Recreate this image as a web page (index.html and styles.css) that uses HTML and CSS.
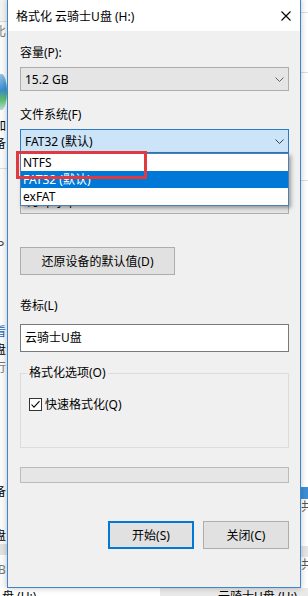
FILE: index.html
```html
<!DOCTYPE html>
<html lang="zh-CN">
<head>
    <meta charset="UTF-8">
    <title>格式化 云骑士U盘 (H:)</title>
    <meta name="viewport" content="width=device-width">
    <link rel="stylesheet" href="styles.css">
</head>
<body>
    <!-- the explorer window behind the dialog, only its edges show -->
    <div class="backdrop">
        <div class="bg-left">
            <div class="bl-top"></div>
            <span class="glyph muted g-bi">比</span>
            <div class="drive-icon"></div>
            <span class="glyph g-jia">加</span>
            <span class="glyph g-bei">备</span>
            <div class="bl-line"></div>
            <span class="glyph g-p">P</span>
            <span class="glyph link g-kan">看</span>
            <span class="glyph g-pan">盘</span>
            <span class="glyph muted g-xing">行</span>
            <span class="glyph g-bei2">备</span>
            <span class="glyph g-pan2">盘</span>
            <div class="bl-bar"></div>
            <span class="glyph muted g-b">B</span>
        </div>
        <div class="bg-mid"></div>
        <div class="bg-right">
            <div class="br-line br-1"></div>
            <div class="br-line br-2"></div>
            <div class="br-line br-3"></div>
            <div class="br-sel"></div>
            <span class="rglyph">共</span>
            <div class="br-bar"></div>
            <span class="rglyph">共</span>
        </div>
    </div>
    <div class="bg-bottom">
        <span class="bb-left">盘 (H:)</span>
        <span class="bb-right">云骑士U盘 (H:)</span>
    </div>

    <div class="dialog">
        <div class="titlebar">
            <span class="title">格式化 云骑士U盘 (H:)</span>
            <svg class="close" width="10" height="10" viewBox="0 0 10 10">
                <path d="M0.5 0.5L9.5 9.5M9.5 0.5L0.5 9.5" stroke="#000" stroke-width="1.1" fill="none"/>
            </svg>
        </div>

        <div class="content">
            <div class="label l-cap">容量(P):</div>
            <div class="combo">
                <span>15.2 GB</span>
                <svg class="chevron" width="9" height="5" viewBox="0 0 9 5">
                    <polyline points="0.5,0.5 4.5,4.5 8.5,0.5" stroke="#606060" fill="none"/>
                </svg>
            </div>

            <div class="label l-fs">文件系统(F)</div>
            <div class="combo-wrap">
                <div class="combo focused">
                    <span>FAT32 (默认)</span>
                    <svg class="chevron" width="9" height="5" viewBox="0 0 9 5">
                        <polyline points="0.5,0.5 4.5,4.5 8.5,0.5" stroke="#404040" fill="none"/>
                    </svg>
                </div>
                <ul class="dropdown">
                    <li>NTFS</li>
                    <li class="selected">FAT32 (默认)</li>
                    <li>exFAT</li>
                </ul>
                <div class="highlight"></div>
            </div>

            <div class="label l-unit">分配单元大小(A)</div>
            <div class="combo c-unit">
                <span>16 千字节</span>
            </div>

            <button class="btn btn-restore">还原设备的默认值(D)</button>

            <div class="label l-vol">卷标(L)</div>
            <div class="textbox">云骑士U盘</div>

            <fieldset class="group">
                <legend>格式化选项(O)</legend>
                <div class="group-body">
                    <div class="check-row">
                        <svg class="checkbox" width="13" height="13" viewBox="0 0 13 13">
                            <rect x="0.5" y="0.5" width="12" height="12" fill="#fff" stroke="#333"/>
                            <polyline points="2.5,6.5 5,9.2 10.5,3.2" stroke="#000" stroke-width="1.1" fill="none"/>
                        </svg>
                        <span>快速格式化(Q)</span>
                    </div>
                </div>
            </fieldset>

            <div class="progress"></div>

            <div class="actions">
                <button class="btn btn-primary">开始(S)</button>
                <button class="btn">关闭(C)</button>
            </div>
        </div>
    </div>
</body>
</html>
```

FILE: styles.css
```css
*{
    padding: 0;
    margin: 0;
    box-sizing: border-box;
}
body{
    font-family: "Noto Sans", "Noto Sans CJK SC", sans-serif;
    font-size: 12px;
    color: #000;
    background: #fff;
    width: 308px;
    height: 596px;
    overflow: hidden;
    position: relative;
}

/* backdrop window */
.backdrop{
    display: flex;
    height: 588px;
}
.bg-left{
    width: 7px;
    overflow: hidden;
    background: #fbfbfb;
    display: flex;
    flex-direction: column;
}
.bg-mid{
    width: 294px;
}
.bg-right{
    width: 7px;
    overflow: hidden;
    background: #fff;
    display: flex;
    flex-direction: column;
}
.bl-top{
    height: 22px;
    border-bottom: 1px solid #d9d9d9;
    background: #f3f3f3;
}
.glyph{
    display: block;
    height: 16px;
    line-height: 16px;
    margin-left: -6px;
    white-space: nowrap;
}
.glyph.muted{ color: #777; }
.glyph.link{ color: #1a5fb4; }
.g-bi{ margin-top: 2px; }
.drive-icon{
    margin-top: 34px;
    height: 36px;
    margin-left: -4px;
    border-radius: 0 50% 50% 0;
    background: linear-gradient(160deg, #9cc8e8 0%, #3b8ed0 45%, #5fbf6a 70%, #c9e3f3 100%);
}
.g-jia{ margin-top: 8px; }
.g-bei{ margin-top: 2px; }
.bl-line{
    margin-top: 16px;
    height: 1px;
    background: #dcdcdc;
}
.g-p{ margin-top: 69px; margin-left: -3px; color: #444; }
.g-kan{ margin-top: 70px; }
.g-pan{ margin-top: 2px; }
.g-xing{ margin-top: 2px; }
.g-bei2{ margin-top: 108px; }
.g-pan2{ margin-top: 28px; }
.bl-bar{
    height: 11px;
    background: #e1e1e1;
}
.g-b{ margin-top: 7px; margin-left: -2px; }

.br-line{
    height: 1px;
    background: #dedede;
}
.br-1{ margin-top: 12px; }
.br-2{ margin-top: 59px; }
.br-3{ margin-top: 107px; }
.br-sel{
    margin-top: 306px;
    height: 12px;
    background: #3d8fd6;
}
.rglyph{
    display: block;
    height: 16px;
    line-height: 16px;
    color: #555;
    white-space: nowrap;
}
.br-bar{
    margin-top: 31px;
    height: 11px;
    background: #e5e5e5;
}

.bg-bottom{
    height: 8px;
    display: flex;
    overflow: hidden;
    line-height: 18px;
}
.bb-left{
    width: 160px;
    padding-left: 2px;
}
.bb-right{
    flex: 1;
    background: #e9e9e9;
    padding-left: 58px;
    white-space: nowrap;
}

/* format dialog */
.dialog{
    position: absolute;
    top: -1px;
    left: 7px;
    width: 294px;
    height: 589px;
    border: 1px solid #3c85cf;
    background: #f0f0f0;
    box-shadow: 0 0 6px rgba(0, 0, 0, 0.25);
}
.titlebar{
    height: 31px;
    background: #fff;
    display: flex;
    align-items: center;
    justify-content: space-between;
    padding: 0 9px 0 8px;
}
.content{
    padding: 0 11px 0 12px;
}
.label{
    line-height: 16px;
    height: 16px;
}
.l-cap{ margin-top: 14px; }
.l-fs{ margin-top: 16px; }
.l-unit{ margin-top: 12px; }
.l-vol{ margin-top: 23px; }

.combo{
    margin-top: 6px;
    height: 24px;
    background: #e5e5e5;
    border: 1px solid #adadad;
    display: flex;
    align-items: center;
    justify-content: space-between;
    padding: 0 4px;
}
.combo.focused{
    margin-top: 0;
    background: #cce4f7;
    border-color: #2c7ac6;
}
.c-unit{ margin-top: 9px; }
.combo-wrap{
    margin-top: 6px;
    position: relative;
}
.dropdown{
    position: absolute;
    top: 24px;
    left: 0;
    width: 100%;
    list-style: none;
    background: #fff;
    border: 1px solid #4f7fb0;
    box-shadow: 2px 2px 4px rgba(0, 0, 0, 0.35);
    z-index: 2;
}
.dropdown>li{
    height: 17px;
    line-height: 17px;
    padding-left: 2px;
}
.dropdown>li.selected{
    background: #0078d7;
    color: #fff;
}
.highlight{
    position: absolute;
    left: -4px;
    top: 22px;
    width: 131px;
    height: 28px;
    border: 3px solid #e0393f;
    z-index: 3;
}

.btn{
    font: inherit;
    color: #000;
    height: 28px;
    width: 86px;
    background: #e1e1e1;
    border: 1px solid #adadad;
}
.btn-restore{
    display: block;
    margin-top: 33px;
    width: 155px;
}
.btn-primary{
    border: 2px solid #0078d7;
}

.textbox{
    margin-top: 10px;
    height: 28px;
    line-height: 26px;
    background: #fff;
    border: 1px solid #7a7a7a;
    padding-left: 4px;
}

.group{
    margin-top: 15px;
    border: 1px solid #dcdcdc;
    padding: 0 8px 0 6px;
}
.group>legend{
    line-height: 12px;
    padding: 0 2px;
}
.group-body{
    height: 68px;
    padding-top: 18px;
}
.check-row{
    display: flex;
    align-items: center;
    gap: 3px;
    height: 14px;
    padding-left: 2px;
}
.checkbox{
    display: block;
}

.progress{
    margin-top: 19px;
    height: 16px;
    background: #e6e6e6;
    border: 1px solid #bcbcbc;
}

.actions{
    margin-top: 38px;
    display: flex;
    justify-content: flex-end;
    gap: 9px;
}
```
